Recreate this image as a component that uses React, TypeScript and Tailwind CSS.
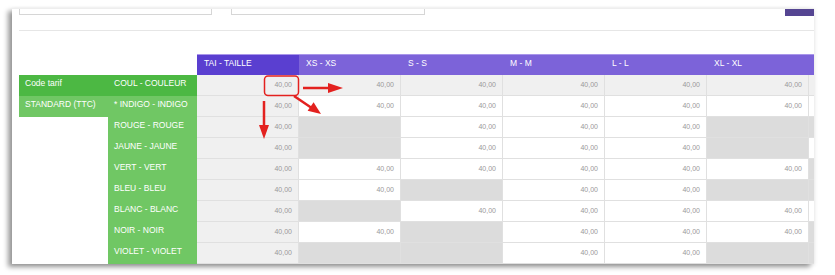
import React from 'react';

// Price grid: colour x size, "x" = cell with a price, "-" = disabled cell
const sizes = ['TAI - TAILLE', 'XS - XS', 'S - S', 'M - M', 'L - L', 'XL - XL', ''];

const rows: { label: string; left: string; cells: string }[] = [
  { label: 'COUL - COULEUR', left: 'Code tarif', cells: 'xxxxxx.' },
  { label: '* INDIGO - INDIGO', left: 'STANDARD (TTC)', cells: 'xxxxxxo' },
  { label: 'ROUGE - ROUGE', left: '', cells: 'x-xxx--' },
  { label: 'JAUNE - JAUNE', left: '', cells: 'x-xxx-o' },
  { label: 'VERT - VERT', left: '', cells: 'xxxxxx-' },
  { label: 'BLEU - BLEU', left: '', cells: 'xx-xx--' },
  { label: 'BLANC - BLANC', left: '', cells: 'x-xxxxo' },
  { label: 'NOIR - NOIR', left: '', cells: 'xx-xxx-' },
  { label: 'VIOLET - VIOLET', left: '', cells: 'x--xx--' },
];

const Cell = ({ kind, col, head }: { kind: string; col: number; head: boolean }) => {
  // first column and first row are read-only (light grey)
  let bg = 'bg-white';
  if (head || col === 0) bg = 'bg-[#f0f0f0]';
  else if (kind === '-') bg = 'bg-[#dcdcdc]';
  const showValue = kind === 'x';
  return (
    <div
      className={`w-[102px] shrink-0 h-full border-r border-b border-[#e0e0e0] ${bg} flex items-center justify-end pr-[6px] text-[7px] text-[#999999]`}
    >
      {showValue ? '40,00' : ''}
    </div>
  );
};

export default function App() {
  return (
    <div className="relative w-[835px] h-[275px] bg-white overflow-hidden" style={{ fontFamily: '"Liberation Sans", Arial, sans-serif' }}>
      <div className="mt-[8px] ml-[12px] w-[802px] h-[256px] bg-white border-t border-[#eeeeee] shadow-[-4px_3px_5px_rgba(0,0,0,0.4),1px_1px_4px_rgba(0,0,0,0.08)] overflow-hidden">
        {/* filters */}
        <div className="flex pl-[7px] h-[7px] -mt-px">
          <div className="w-[193px] h-[7px] border-l border-r border-b border-[#d6d6d6]" />
          <div className="ml-[19px] w-[194px] h-[7px] border-l border-r border-b border-[#d6d6d6]" />
          <div className="ml-auto mt-[1px] w-[29px] h-[7px] bg-[#554592]" />
        </div>
        <div className="ml-[7px] mt-[15px] h-px bg-[#e6e6e6]" />

        {/* grid */}
        <div className="ml-[7px] mt-[23px]">
          <div className="flex h-[21px]">
            <div className="w-[178px] shrink-0" />
            {sizes.map((s, i) => (
              <div
                key={i}
                className={`w-[102px] shrink-0 h-full border-t border-[#a996ea] pl-[7px] pt-[2px] text-[8.5px] text-white ${i === 0 ? 'bg-[#5a3fd0]' : 'bg-[#7c63d9]'}`}
              >
                {s}
              </div>
            ))}
          </div>
          {rows.map((r, ri) => {
            const head = ri === 0;
            const green = head ? 'bg-[#4cb843]' : 'bg-[#70c764]';
            return (
              <div key={ri} className="flex h-[21px]">
                <div className={`w-[89px] shrink-0 h-full pl-[6px] pt-[2px] text-[8.5px] text-white ${ri < 2 ? green : 'bg-white'}`}>
                  {r.left}
                </div>
                <div className={`w-[89px] shrink-0 h-full pl-[6px] pt-[2px] text-[8.5px] text-white ${green}`}>
                  {r.label}
                </div>
                {r.cells.split('').map((k, ci) => (
                  <Cell key={ci} kind={k} col={ci} head={head} />
                ))}
              </div>
            );
          })}
        </div>
      </div>

      {/* red annotations over the grid */}
      <svg className="absolute left-0 top-0 pointer-events-none" width="835" height="275" viewBox="0 0 835 275">
        <rect x="264.5" y="76" width="34" height="19.5" rx="3.5" fill="none" stroke="#e3211f" strokeWidth="1.5" />
        <line x1="303" y1="88" x2="330" y2="88" stroke="#e3211f" strokeWidth="2.5" />
        <polygon points="328,83 343,88 328,93" fill="#e3211f" />
        <line x1="294" y1="96" x2="311" y2="107.5" stroke="#e3211f" strokeWidth="2.5" />
        <polygon points="307.6,110.7 313.6,102.2 321,114" fill="#e3211f" />
        <line x1="264" y1="101" x2="264" y2="127" stroke="#e3211f" strokeWidth="2.5" />
        <polygon points="259,125 264,139 269,125" fill="#e3211f" />
      </svg>
    </div>
  );
}
